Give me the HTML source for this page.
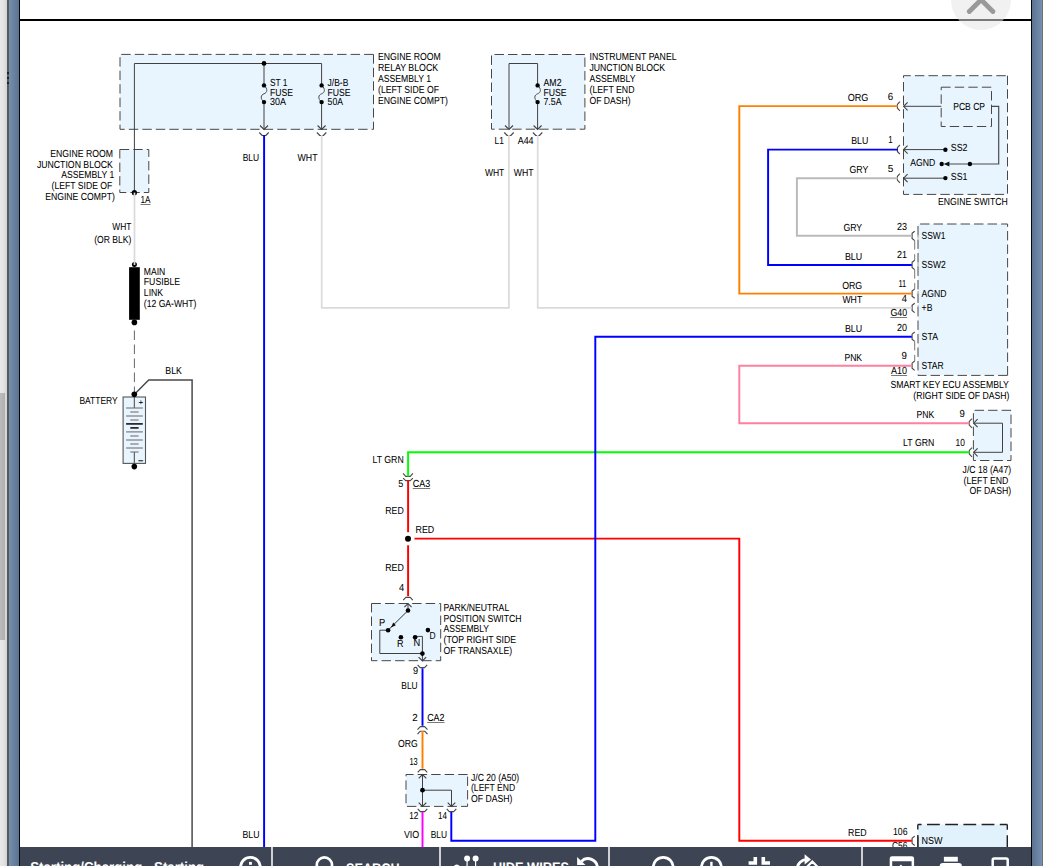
<!DOCTYPE html>
<html lang="en">
<head>
<meta charset="utf-8">
<title>Starting/Charging - Starting</title>
<style>
html,body{margin:0;padding:0;background:#fff;}
body{width:1043px;height:866px;overflow:hidden;position:relative;font-family:"Liberation Sans",sans-serif;}
#stage{position:absolute;left:0;top:0;width:1043px;height:866px;overflow:hidden;background:#fff;}
#diagram{position:absolute;left:0;top:0;}
#diagram text{font-family:"Liberation Sans",sans-serif;font-size:10.2px;fill:#000;stroke:#000;stroke-width:.05px;text-rendering:geometricPrecision;}
.track{position:absolute;left:0;top:0;width:7px;height:866px;background:linear-gradient(90deg,#e8e8e8 0,#e3e3e3 50%,#d2d2d2 100%);}
.thumb{position:absolute;left:0;top:393px;width:5px;height:247px;background:linear-gradient(90deg,#bcbcbc,#b0b0b0);}
.edge{position:absolute;top:0;height:866px;}
.lgrip{left:7px;width:2px;background:#595959;}
.lblue{left:9px;width:10px;background:linear-gradient(90deg,#7490b0,#5c7390);}
.lline{left:19px;width:1.3px;background:#05090f;}
.rline{left:1030.8px;width:1.3px;background:#05090f;}
.rblue{left:1032px;width:10px;background:linear-gradient(90deg,#5c7390,#7490b0);}
.rgrip{left:1042px;width:1px;background:#6e6e6e;}
.topline{position:absolute;left:20px;top:19px;width:1011px;height:2px;background:#000;}
.dots i{position:absolute;left:7px;width:2px;height:2px;background:#1c1f24;}
.up{position:absolute;left:951.1px;top:-30.1px;width:60px;height:60px;border-radius:50%;background:rgba(228,228,228,.53);}
#bar{position:absolute;left:20px;top:847px;width:1011px;height:60px;background:#3d4555;color:#fff;}
#tools{position:absolute;left:0;top:0;}
#tools text{font-family:"Liberation Sans",sans-serif;text-rendering:geometricPrecision;}
</style>
</head>
<body>
<div id="stage">
<svg id="diagram" width="1043" height="866" viewBox="0 0 1043 866">
<rect x="120.0" y="54.4" width="253.5" height="74.9" fill="#e9f5fe"/>
<path d="M121.28 54.4H130.68M134.77 54.4H144.17M148.26 54.4H157.66M161.75 54.4H171.15M175.24 54.4H184.64M188.73 54.4H198.13M202.22 54.4H211.62M215.71 54.4H225.11M229.20 54.4H238.60M242.69 54.4H252.09M256.18 54.4H265.58M269.67 54.4H279.07M283.16 54.4H292.56M296.65 54.4H306.05M310.14 54.4H319.54M323.63 54.4H333.03M337.12 54.4H346.52M350.61 54.4H360.01M364.10 54.4H373.50M120.00 129.3H124.76M128.85 129.3H138.25M142.34 129.3H151.74M155.83 129.3H165.23M169.32 129.3H178.72M182.81 129.3H192.21M196.30 129.3H205.70M209.79 129.3H219.19M223.28 129.3H232.68M236.77 129.3H246.17M250.26 129.3H259.66M263.75 129.3H273.15M277.24 129.3H286.64M290.73 129.3H300.13M304.22 129.3H313.62M317.71 129.3H327.11M331.20 129.3H340.60M344.69 129.3H354.09M358.18 129.3H367.58M371.67 129.3H373.50M120.0 57.21V66.61M120.0 70.70V80.10M120.0 84.19V93.59M120.0 97.68V107.08M120.0 111.17V120.57M120.0 124.66V129.30M373.5 54.40V63.68M373.5 67.77V77.17M373.5 81.26V90.66M373.5 94.75V104.15M373.5 108.24V117.64M373.5 121.73V129.30" fill="none" stroke="#474747" stroke-width="1.0"/>
<rect x="119.8" y="149.5" width="29.0" height="43.0" fill="#e9f5fe"/>
<path d="M119.80 149.5H129.20M133.29 149.5H142.69M146.78 149.5H148.75M119.80 192.5H126.27M130.36 192.5H139.76M143.85 192.5H148.75M119.8 149.50V158.50M119.8 162.59V171.99M119.8 176.08V185.48M119.8 189.57V192.50M148.8 149.50V156.93M148.8 161.02V170.42M148.8 174.51V183.91M148.8 188.00V192.50" fill="none" stroke="#474747" stroke-width="1.0"/>
<rect x="491.5" y="54.5" width="93.4" height="74.7" fill="#e9f5fe"/>
<path d="M494.56 54.5H503.96M508.05 54.5H517.45M521.54 54.5H530.94M535.03 54.5H544.43M548.52 54.5H557.92M562.01 54.5H571.41M575.50 54.5H584.90M491.50 129.2H494.68M498.77 129.2H508.17M512.26 129.2H521.66M525.75 129.2H535.15M539.24 129.2H548.64M552.73 129.2H562.13M566.22 129.2H575.62M579.71 129.2H584.90M491.5 55.53V64.93M491.5 69.02V78.42M491.5 82.51V91.91M491.5 96.00V105.40M491.5 109.49V118.89M491.5 122.98V129.20M584.9 57.54V66.94M584.9 71.03V80.43M584.9 84.52V93.92M584.9 98.01V107.41M584.9 111.50V120.90M584.9 124.99V129.20" fill="none" stroke="#474747" stroke-width="1.0"/>
<rect x="903.5" y="75.7" width="104.0" height="118.7" fill="#e9f5fe"/>
<path d="M903.50 75.7H910.75M914.92 75.7H924.32M928.49 75.7H937.89M942.06 75.7H951.46M955.63 75.7H965.03M969.20 75.7H978.60M982.77 75.7H992.17M996.34 75.7H1005.74M903.50 194.4H909.08M913.25 194.4H922.65M926.82 194.4H936.22M940.39 194.4H949.79M953.96 194.4H963.36M967.53 194.4H976.93M981.10 194.4H990.50M994.67 194.4H1004.07M903.5 75.70V77.85M903.5 82.02V91.42M903.5 95.59V104.99M903.5 109.16V118.56M903.5 122.73V132.13M903.5 136.30V145.70M903.5 149.87V159.27M903.5 163.44V172.84M903.5 177.01V186.41M903.5 190.58V194.40M1007.5 75.70V85.10M1007.5 89.27V98.67M1007.5 102.84V112.24M1007.5 116.41V125.81M1007.5 129.98V139.38M1007.5 143.55V152.95M1007.5 157.12V166.52M1007.5 170.69V180.09M1007.5 184.26V193.66" fill="none" stroke="#474747" stroke-width="1.0"/>
<rect x="941.2" y="87.2" width="50.3" height="39.3" fill="#e9f5fe"/>
<path d="M941.20 87.2H950.60M954.75 87.2H964.15M968.30 87.2H977.70M981.85 87.2H991.25M941.20 126.5H945.60M949.75 126.5H959.15M963.30 126.5H972.70M976.85 126.5H986.25M990.40 126.5H991.50M941.2 87.20V90.25M941.2 94.40V103.80M941.2 107.95V117.35M941.2 121.50V126.50M991.5 91.10V100.50M991.5 104.65V114.05M991.5 118.20V126.50" fill="none" stroke="#474747" stroke-width="1.0"/>
<rect x="918.0" y="224.0" width="89.6" height="151.4" fill="#e9f5fe"/>
<path d="M920.10 224.0H929.50M933.60 224.0H943.00M947.10 224.0H956.50M960.60 224.0H970.00M974.10 224.0H983.50M987.60 224.0H997.00M1001.10 224.0H1007.60M918.00 375.4H926.50M930.60 375.4H940.00M944.10 375.4H953.50M957.60 375.4H967.00M971.10 375.4H980.50M984.60 375.4H994.00M998.10 375.4H1007.50M918.0 226.00V235.40M918.0 239.50V248.90M918.0 253.00V262.40M918.0 266.50V275.90M918.0 280.00V289.40M918.0 293.50V302.90M918.0 307.00V316.40M918.0 320.50V329.90M918.0 334.00V343.40M918.0 347.50V356.90M918.0 361.00V370.40M918.0 374.50V375.40M1007.6 224.00V226.90M1007.6 231.00V240.40M1007.6 244.50V253.90M1007.6 258.00V267.40M1007.6 271.50V280.90M1007.6 285.00V294.40M1007.6 298.50V307.90M1007.6 312.00V321.40M1007.6 325.50V334.90M1007.6 339.00V348.40M1007.6 352.50V361.90M1007.6 366.00V375.40" fill="none" stroke="#474747" stroke-width="1.0"/>
<rect x="973.4" y="410.3" width="37.6" height="50.2" fill="#e9f5fe"/>
<path d="M974.62 410.3H984.02M988.11 410.3H997.51M1001.60 410.3H1011.00M973.40 460.5H975.94M980.03 460.5H989.43M993.52 460.5H1002.92M1007.01 460.5H1011.00M973.4 413.17V422.57M973.4 426.66V436.06M973.4 440.15V449.55M973.4 453.64V460.50M1011.0 410.30V410.53M1011.0 414.62V424.02M1011.0 428.11V437.51M1011.0 441.60V451.00M1011.0 455.09V460.50" fill="none" stroke="#474747" stroke-width="1.0"/>
<rect x="371.5" y="603.5" width="69.2" height="57.2" fill="#e9f5fe"/>
<path d="M371.50 603.5H380.90M385.05 603.5H394.45M398.60 603.5H408.00M412.15 603.5H421.55M425.70 603.5H435.10M439.25 603.5H440.70M371.50 660.7H377.40M381.55 660.7H390.95M395.10 660.7H404.50M408.65 660.7H418.05M422.20 660.7H431.60M435.75 660.7H440.70M371.5 603.50V612.40M371.5 616.55V625.95M371.5 630.10V639.50M371.5 643.65V653.05M371.5 657.20V660.70M440.7 603.50V611.45M440.7 615.60V625.00M440.7 629.15V638.55M440.7 642.70V652.10M440.7 656.25V660.70" fill="none" stroke="#474747" stroke-width="1.0"/>
<rect x="406.0" y="774.5" width="61.6" height="31.9" fill="#e9f5fe"/>
<path d="M406.00 774.5H413.60M417.70 774.5H427.10M431.20 774.5H440.60M444.70 774.5H454.10M458.20 774.5H467.60M407.00 806.4H416.40M420.50 806.4H429.90M434.00 806.4H443.40M447.50 806.4H456.90M461.00 806.4H467.60M406.0 774.50V776.30M406.0 780.40V789.80M406.0 793.90V803.30M467.6 776.60V786.00M467.6 790.10V799.50M467.6 803.60V806.40" fill="none" stroke="#474747" stroke-width="1.0"/>
<rect x="917.8" y="824.5" width="89.5" height="55.5" fill="#e2f2fc"/>
<path d="M917.80 824.5H921.60M927.00 824.5H939.80M945.20 824.5H958.00M963.40 824.5H976.20M981.60 824.5H994.40M999.80 824.5H1007.30M917.80 880.0H922.80M928.20 880.0H941.00M946.40 880.0H959.20M964.60 880.0H977.40M982.80 880.0H995.60M1001.00 880.0H1007.30M917.8 824.50V829.60M917.8 835.00V847.80M917.8 853.20V866.00M917.8 871.40V880.00M1007.3 824.50V829.80M1007.3 835.20V848.00M1007.3 853.40V866.20M1007.3 871.60V880.00" fill="none" stroke="#222" stroke-width="1.4"/>
<path d="M134.4 192.5 L134.4 63.5 L321.6 63.5 L321.6 85.0" fill="none" stroke="#404040" stroke-width="1.0"/>
<path d="M264.0 63.5 L264.0 85.0" fill="none" stroke="#404040" stroke-width="1.0"/>
<path d="M264.0 102.0 L264.0 129.3" fill="none" stroke="#404040" stroke-width="1.0"/>
<path d="M321.6 102.0 L321.6 129.3" fill="none" stroke="#404040" stroke-width="1.0"/>
<path d="M264.0 85.4 C268.2 88.9 267.2 92.8 264.0 93.8 C260.8 94.8 259.8 98.6 264.0 102.1" fill="none" stroke="#4c4c4c" stroke-width="1.0"/>
<path d="M321.6 85.4 C325.8 88.9 324.8 92.8 321.6 93.8 C318.4 94.8 317.4 98.6 321.6 102.1" fill="none" stroke="#4c4c4c" stroke-width="1.0"/>
<path d="M260.0 125.5 L264.0 129.5 L268.0 125.5" fill="none" stroke="#404040" stroke-width="1.1"/>
<path d="M317.6 125.5 L321.6 129.5 L325.6 125.5" fill="none" stroke="#404040" stroke-width="1.1"/>
<path d="M259.3 132.5 L262.2 135.5 L265.8 135.5 L268.7 132.5" fill="none" stroke="#4a4a4a" stroke-width="1.15" stroke-linejoin="round"/>
<path d="M316.9 132.5 L319.8 135.5 L323.4 135.5 L326.3 132.5" fill="none" stroke="#4a4a4a" stroke-width="1.15" stroke-linejoin="round"/>
<circle cx="134.4" cy="192.7" r="2.6" fill="#000"/>
<path d="M509.0 129.3 L509.0 63.5 L537.6 63.5 L537.6 85.0" fill="none" stroke="#404040" stroke-width="1.0"/>
<path d="M537.6 102.0 L537.6 129.3" fill="none" stroke="#404040" stroke-width="1.0"/>
<path d="M537.6 85.4 C541.8 88.9 540.8 92.8 537.6 93.8 C534.4 94.8 533.4 98.6 537.6 102.1" fill="none" stroke="#4c4c4c" stroke-width="1.0"/>
<path d="M505.0 125.5 L509.0 129.5 L513.0 125.5" fill="none" stroke="#404040" stroke-width="1.1"/>
<path d="M533.6 125.5 L537.6 129.5 L541.6 125.5" fill="none" stroke="#404040" stroke-width="1.1"/>
<path d="M504.3 132.5 L507.2 135.5 L510.8 135.5 L513.7 132.5" fill="none" stroke="#4a4a4a" stroke-width="1.15" stroke-linejoin="round"/>
<path d="M532.9 132.5 L535.8 135.5 L539.4 135.5 L542.3 132.5" fill="none" stroke="#4a4a4a" stroke-width="1.15" stroke-linejoin="round"/>
<rect x="129.1" y="267.2" width="10.7" height="52.6" fill="#000"/>
<circle cx="134.4" cy="264.6" r="2.5" fill="#000"/>
<line x1="134.4" y1="330.5" x2="134.4" y2="392" stroke="#666" stroke-width="1" stroke-dasharray="9.5 4.5"/>
<rect x="123.1" y="397.0" width="22.4" height="66.4" fill="#e9f5fe" stroke="#555" stroke-width="1.1"/>
<path d="M134.3 397.0 L134.3 408.0" fill="none" stroke="#444" stroke-width="1.0"/>
<path d="M134.3 452.0 L134.3 463.4" fill="none" stroke="#444" stroke-width="1.0"/>
<line x1="126.1" y1="408" x2="142.8" y2="408" stroke="#6c6c6c" stroke-width="1.05"/>
<line x1="126.1" y1="416" x2="142.8" y2="416" stroke="#6c6c6c" stroke-width="1.05"/>
<line x1="126.1" y1="423.9" x2="142.8" y2="423.9" stroke="#151515" stroke-width="1.6"/>
<line x1="126.1" y1="431.9" x2="142.8" y2="431.9" stroke="#6c6c6c" stroke-width="1.05"/>
<line x1="126.1" y1="440" x2="142.8" y2="440" stroke="#6c6c6c" stroke-width="1.05"/>
<line x1="126.1" y1="448" x2="142.8" y2="448" stroke="#6c6c6c" stroke-width="1.05"/>
<line x1="130.3" y1="412" x2="138.6" y2="412" stroke="#6c6c6c" stroke-width="1.05"/>
<line x1="130.3" y1="420" x2="138.6" y2="420" stroke="#6c6c6c" stroke-width="1.05"/>
<line x1="130.3" y1="427.9" x2="138.6" y2="427.9" stroke="#151515" stroke-width="1.6"/>
<line x1="130.3" y1="436" x2="138.6" y2="436" stroke="#6c6c6c" stroke-width="1.05"/>
<line x1="130.3" y1="444" x2="138.6" y2="444" stroke="#6c6c6c" stroke-width="1.05"/>
<line x1="130.3" y1="452" x2="138.6" y2="452" stroke="#6c6c6c" stroke-width="1.05"/>
<path d="M899.9 101.7 L897.4 104.4 L897.4 108.2 L899.9 110.9" fill="none" stroke="#4a4a4a" stroke-width="1.15" stroke-linejoin="round"/>
<path d="M907.6 102.3 L903.6 106.3 L907.6 110.3" fill="none" stroke="#404040" stroke-width="1.1"/>
<path d="M899.9 145.0 L897.4 147.7 L897.4 151.5 L899.9 154.2" fill="none" stroke="#4a4a4a" stroke-width="1.15" stroke-linejoin="round"/>
<path d="M907.6 145.6 L903.6 149.6 L907.6 153.6" fill="none" stroke="#404040" stroke-width="1.1"/>
<path d="M899.9 173.6 L897.4 176.3 L897.4 180.1 L899.9 182.8" fill="none" stroke="#4a4a4a" stroke-width="1.15" stroke-linejoin="round"/>
<path d="M907.6 174.2 L903.6 178.2 L907.6 182.2" fill="none" stroke="#404040" stroke-width="1.1"/>
<path d="M903.6 106.3 L941.3 106.3" fill="none" stroke="#404040" stroke-width="1.0"/>
<path d="M903.6 149.6 L945.4 149.6" fill="none" stroke="#404040" stroke-width="1.0"/>
<path d="M903.6 178.2 L945.4 178.2" fill="none" stroke="#404040" stroke-width="1.0"/>
<path d="M991.4 106.3 L998.7 106.3 L998.7 164.0 L946.0 164.0" fill="none" stroke="#4a4a4a" stroke-width="1.2"/>
<path d="M943.6 164 L949.4 161.6 L949.4 166.4 Z" fill="#111"/>
<path d="M914.7 231.2 L912.1 233.3 L912.1 238.5 L914.7 240.6" fill="none" stroke="#4a4a4a" stroke-width="1.15" stroke-linejoin="round"/>
<path d="M918.0 233.3 L918.0 238.5" fill="none" stroke="#9aa0a4" stroke-width="1.0"/>
<path d="M914.7 260.2 L912.1 262.3 L912.1 267.5 L914.7 269.6" fill="none" stroke="#4a4a4a" stroke-width="1.15" stroke-linejoin="round"/>
<path d="M918.0 262.3 L918.0 267.5" fill="none" stroke="#9aa0a4" stroke-width="1.0"/>
<path d="M914.7 288.9 L912.1 291.0 L912.1 296.2 L914.7 298.3" fill="none" stroke="#4a4a4a" stroke-width="1.15" stroke-linejoin="round"/>
<path d="M918.0 291.0 L918.0 296.2" fill="none" stroke="#9aa0a4" stroke-width="1.0"/>
<path d="M914.7 303.2 L912.1 305.3 L912.1 310.5 L914.7 312.6" fill="none" stroke="#4a4a4a" stroke-width="1.15" stroke-linejoin="round"/>
<path d="M918.0 305.3 L918.0 310.5" fill="none" stroke="#9aa0a4" stroke-width="1.0"/>
<path d="M914.7 332.0 L912.1 334.1 L912.1 339.3 L914.7 341.4" fill="none" stroke="#4a4a4a" stroke-width="1.15" stroke-linejoin="round"/>
<path d="M918.0 334.1 L918.0 339.3" fill="none" stroke="#9aa0a4" stroke-width="1.0"/>
<path d="M914.7 361.0 L912.1 363.1 L912.1 368.3 L914.7 370.4" fill="none" stroke="#4a4a4a" stroke-width="1.15" stroke-linejoin="round"/>
<path d="M918.0 363.1 L918.0 368.3" fill="none" stroke="#9aa0a4" stroke-width="1.0"/>
<path d="M914.7 240.6V260.2" fill="none" stroke="#777" stroke-width="1" stroke-dasharray="9 4.5"/>
<path d="M914.7 269.6V288.9" fill="none" stroke="#777" stroke-width="1" stroke-dasharray="9 4.5"/>
<path d="M914.7 341.4V361.0" fill="none" stroke="#777" stroke-width="1" stroke-dasharray="9 4.5"/>
<path d="M972.1 418.6 L969.3 421.3 L969.3 425.1 L972.1 427.8" fill="none" stroke="#4a4a4a" stroke-width="1.15" stroke-linejoin="round"/>
<path d="M977.6 419.2 L973.6 423.2 L977.6 427.2" fill="none" stroke="#404040" stroke-width="1.1"/>
<path d="M972.1 447.7 L969.3 450.4 L969.3 454.2 L972.1 456.9" fill="none" stroke="#4a4a4a" stroke-width="1.15" stroke-linejoin="round"/>
<path d="M977.6 448.3 L973.6 452.3 L977.6 456.3" fill="none" stroke="#404040" stroke-width="1.1"/>
<path d="M973.6 423.2 L1002.5 423.2 L1002.5 452.3 L973.6 452.3" fill="none" stroke="#404040" stroke-width="1.0"/>
<path d="M403.1 473.4 L405.7 476.4 L410.3 476.4 L412.9 473.4" fill="none" stroke="#4a4a4a" stroke-width="1.15" stroke-linejoin="round"/>
<path d="M403.1 478.2 L405.7 480.6 L410.3 480.6 L412.9 478.2" fill="none" stroke="#4a4a4a" stroke-width="1.15" stroke-linejoin="round"/>
<path d="M403.2 600.1 L405.8 597.3 L410.2 597.3 L412.8 600.1" fill="none" stroke="#4a4a4a" stroke-width="1.15" stroke-linejoin="round"/>
<path d="M404.4 607.2 L408.0 603.6 L411.6 607.2" fill="none" stroke="#404040" stroke-width="1.1"/>
<path d="M408.0 603.6 L408.0 610.5" fill="none" stroke="#404040" stroke-width="1.0"/>
<path d="M408.0 610.5 L388.1 630.2" fill="none" stroke="#333" stroke-width="1.0"/>
<path d="M391.0 627.4 L395.9 625.3 L393.2 622.6 Z" fill="#111"/>
<path d="M388.1 630.2 L379.8 630.2 L379.8 653.5 L422.4 653.5" fill="none" stroke="#404040" stroke-width="1.0"/>
<path d="M415.1 636.4 L422.4 636.4 L422.4 660.7" fill="none" stroke="#404040" stroke-width="1.0"/>
<path d="M418.6 657.1 L422.4 660.9 L426.2 657.1" fill="none" stroke="#404040" stroke-width="1.1"/>
<path d="M417.6 664.8 L420.2 667.6 L424.6 667.6 L427.2 664.8" fill="none" stroke="#4a4a4a" stroke-width="1.15" stroke-linejoin="round"/>
<path d="M417.5 729.6 L420.3 726.6 L424.7 726.6 L427.5 729.6" fill="none" stroke="#4a4a4a" stroke-width="1.15" stroke-linejoin="round"/>
<path d="M417.5 734.2 L420.3 731.2 L424.7 731.2 L427.5 734.2" fill="none" stroke="#4a4a4a" stroke-width="1.15" stroke-linejoin="round"/>
<path d="M417.7 772.4 L420.3 769.6 L424.7 769.6 L427.3 772.4" fill="none" stroke="#4a4a4a" stroke-width="1.15" stroke-linejoin="round"/>
<path d="M418.7 778.4 L422.5 774.6 L426.3 778.4" fill="none" stroke="#404040" stroke-width="1.1"/>
<path d="M422.5 774.6 L422.5 806.3" fill="none" stroke="#404040" stroke-width="1.0"/>
<path d="M418.7 802.7 L422.5 806.5 L426.3 802.7" fill="none" stroke="#404040" stroke-width="1.1"/>
<path d="M422.5 790.2 L451.5 790.2 L451.5 806.3" fill="none" stroke="#404040" stroke-width="1.0"/>
<path d="M447.7 802.7 L451.5 806.5 L455.3 802.7" fill="none" stroke="#404040" stroke-width="1.1"/>
<path d="M417.7 808.8 L420.3 811.6 L424.7 811.6 L427.3 808.8" fill="none" stroke="#4a4a4a" stroke-width="1.15" stroke-linejoin="round"/>
<path d="M446.7 808.8 L449.3 811.6 L453.7 811.6 L456.3 808.8" fill="none" stroke="#4a4a4a" stroke-width="1.15" stroke-linejoin="round"/>
<path d="M914.7 836.1 L912.1 838.2 L912.1 843.4 L914.7 845.5" fill="none" stroke="#4a4a4a" stroke-width="1.15" stroke-linejoin="round"/>
<path d="M918.0 836.5 L918.0 847.0" fill="none" stroke="#333" stroke-width="1.1"/>
<path d="M321.7 134.9 L321.7 307.9 L508.9 307.9 L508.9 134.9" fill="none" stroke="#dadada" stroke-width="1.7" stroke-linejoin="miter"/>
<path d="M537.7 134.9 L537.7 307.9 L911.8 307.9" fill="none" stroke="#dadada" stroke-width="1.7" stroke-linejoin="miter"/>
<path d="M134.5 192.6 L134.5 265.0" fill="none" stroke="#dadada" stroke-width="1.7" stroke-linejoin="miter"/>
<path d="M969.6 452.2 L408.1 452.2 L408.1 476.6" fill="none" stroke="#00ff00" stroke-width="1.95" stroke-linejoin="miter"/>
<path d="M408.1 480.6 L408.1 532.2" fill="none" stroke="#ff0000" stroke-width="1.95" stroke-linejoin="miter"/>
<path d="M408.1 545.3 L408.1 596.2" fill="none" stroke="#ff0000" stroke-width="1.95" stroke-linejoin="miter"/>
<path d="M414.5 538.6 L739.3 538.6 L739.3 840.8 L911.8 840.8" fill="none" stroke="#ff0000" stroke-width="1.95" stroke-linejoin="miter"/>
<path d="M911.8 365.7 L739.3 365.7 L739.3 423.2 L969.6 423.2" fill="none" stroke="#ff80a0" stroke-width="1.95" stroke-linejoin="miter"/>
<path d="M897.8 106.1 L739.3 106.1 L739.3 293.6 L911.8 293.6" fill="none" stroke="#ff8000" stroke-width="1.95" stroke-linejoin="miter"/>
<path d="M422.5 731.0 L422.5 768.8" fill="none" stroke="#ff8000" stroke-width="1.95" stroke-linejoin="miter"/>
<path d="M897.8 178.3 L796.9 178.3 L796.9 235.8 L911.8 235.8" fill="none" stroke="#bababa" stroke-width="1.95" stroke-linejoin="miter"/>
<path d="M897.8 149.6 L768.1 149.6 L768.1 264.9 L911.8 264.9" fill="none" stroke="#0000ff" stroke-width="1.95" stroke-linejoin="miter"/>
<path d="M264.1 134.9 L264.1 847.0" fill="none" stroke="#0000ff" stroke-width="1.95" stroke-linejoin="miter"/>
<path d="M422.5 668.3 L422.5 725.8" fill="none" stroke="#0000ff" stroke-width="1.95" stroke-linejoin="miter"/>
<path d="M451.3 812.0 L451.3 840.8 L595.3 840.8 L595.3 336.8 L911.8 336.8" fill="none" stroke="#0000ff" stroke-width="1.95" stroke-linejoin="miter"/>
<path d="M422.5 812.0 L422.5 847.0" fill="none" stroke="#ff00ff" stroke-width="1.95" stroke-linejoin="miter"/>
<path d="M134.5 394.2 L148.7 380.0 L192.1 380.0 L192.1 847.0" fill="none" stroke="#4a4a4a" stroke-width="1.5" stroke-linejoin="miter"/>
<circle cx="264.0" cy="63.4" r="2.4" fill="#000"/>
<circle cx="264.0" cy="85.4" r="2.2" fill="#000"/>
<circle cx="264.0" cy="102.1" r="2.2" fill="#000"/>
<circle cx="321.6" cy="85.4" r="2.2" fill="#000"/>
<circle cx="321.6" cy="102.1" r="2.2" fill="#000"/>
<circle cx="537.6" cy="85.4" r="2.2" fill="#000"/>
<circle cx="537.6" cy="102.1" r="2.2" fill="#000"/>
<circle cx="134.4" cy="322.4" r="2.8" fill="#000"/>
<circle cx="134.3" cy="394.2" r="2.8" fill="#000"/>
<circle cx="134.3" cy="466.6" r="2.8" fill="#000"/>
<circle cx="945.4" cy="149.7" r="2.2" fill="#000"/>
<circle cx="945.4" cy="178.1" r="2.2" fill="#000"/>
<circle cx="941.7" cy="164.0" r="2.2" fill="#000"/>
<circle cx="969.9" cy="164.0" r="2.2" fill="#000"/>
<circle cx="408.0" cy="538.7" r="3.0" fill="#000"/>
<circle cx="408.0" cy="610.5" r="2.3" fill="#000"/>
<circle cx="388.1" cy="630.2" r="2.3" fill="#000"/>
<circle cx="400.9" cy="637.3" r="2.3" fill="#000"/>
<circle cx="415.1" cy="637.3" r="2.3" fill="#000"/>
<circle cx="427.9" cy="630.1" r="2.3" fill="#000"/>
<circle cx="422.4" cy="653.6" r="2.3" fill="#000"/>
<circle cx="422.5" cy="790.2" r="2.4" fill="#000"/>
<text x="138.6" y="404.6" style="font-size:8px">+</text>
<text x="138.6" y="463.0" style="font-size:9px;stroke-width:.25px" textLength="4.4" lengthAdjust="spacingAndGlyphs">–</text>
<text x="50.3" y="157.0" textLength="62.6" lengthAdjust="spacingAndGlyphs">ENGINE ROOM</text>
<text x="36.9" y="168.0" textLength="76.0" lengthAdjust="spacingAndGlyphs">JUNCTION BLOCK</text>
<text x="61.3" y="178.0" textLength="53.0" lengthAdjust="spacingAndGlyphs">ASSEMBLY 1</text>
<text x="51.6" y="189.0" textLength="60.7" lengthAdjust="spacingAndGlyphs">(LEFT SIDE OF</text>
<text x="45.2" y="200.0" textLength="69.7" lengthAdjust="spacingAndGlyphs">ENGINE COMPT)</text>
<text x="112.3" y="230.0" textLength="19.1" lengthAdjust="spacingAndGlyphs">WHT</text>
<text x="94.2" y="243.0" textLength="37.2" lengthAdjust="spacingAndGlyphs">(OR BLK)</text>
<text x="143.8" y="275.0" textLength="21.5" lengthAdjust="spacingAndGlyphs">MAIN</text>
<text x="143.8" y="285.0" textLength="36.3" lengthAdjust="spacingAndGlyphs">FUSIBLE</text>
<text x="143.8" y="296.0" textLength="19.4" lengthAdjust="spacingAndGlyphs">LINK</text>
<text x="143.8" y="307.0" textLength="52.7" lengthAdjust="spacingAndGlyphs">(12 GA-WHT)</text>
<text x="165.3" y="374.0" textLength="16.6" lengthAdjust="spacingAndGlyphs">BLK</text>
<text x="79.4" y="404.0" textLength="38.3" lengthAdjust="spacingAndGlyphs">BATTERY</text>
<text x="269.9" y="86.0" textLength="17.6" lengthAdjust="spacingAndGlyphs">ST 1</text>
<text x="269.9" y="96.0" textLength="23.1" lengthAdjust="spacingAndGlyphs">FUSE</text>
<text x="269.9" y="105.0" textLength="16.0" lengthAdjust="spacingAndGlyphs">30A</text>
<text x="327.6" y="86.0" textLength="20.7" lengthAdjust="spacingAndGlyphs">J/B-B</text>
<text x="327.6" y="96.0" textLength="23.0" lengthAdjust="spacingAndGlyphs">FUSE</text>
<text x="327.6" y="105.0" textLength="15.4" lengthAdjust="spacingAndGlyphs">50A</text>
<text x="242.7" y="161.0" textLength="16.5" lengthAdjust="spacingAndGlyphs">BLU</text>
<text x="297.5" y="161.0" textLength="20.0" lengthAdjust="spacingAndGlyphs">WHT</text>
<text x="378.0" y="60.0" textLength="62.8" lengthAdjust="spacingAndGlyphs">ENGINE ROOM</text>
<text x="378.0" y="71.0" textLength="60.1" lengthAdjust="spacingAndGlyphs">RELAY BLOCK</text>
<text x="378.0" y="82.0" textLength="53.0" lengthAdjust="spacingAndGlyphs">ASSEMBLY 1</text>
<text x="378.0" y="93.0" textLength="61.0" lengthAdjust="spacingAndGlyphs">(LEFT SIDE OF</text>
<text x="378.0" y="104.0" textLength="69.9" lengthAdjust="spacingAndGlyphs">ENGINE COMPT)</text>
<text x="494.5" y="144.0" textLength="9.3" lengthAdjust="spacingAndGlyphs">L1</text>
<text x="517.7" y="144.0" textLength="15.9" lengthAdjust="spacingAndGlyphs">A44</text>
<text x="484.9" y="176.0" textLength="19.4" lengthAdjust="spacingAndGlyphs">WHT</text>
<text x="513.7" y="176.0" textLength="19.8" lengthAdjust="spacingAndGlyphs">WHT</text>
<text x="543.5" y="86.0" textLength="18.0" lengthAdjust="spacingAndGlyphs">AM2</text>
<text x="543.5" y="96.0" textLength="23.1" lengthAdjust="spacingAndGlyphs">FUSE</text>
<text x="543.5" y="105.0" textLength="18.0" lengthAdjust="spacingAndGlyphs">7.5A</text>
<text x="589.5" y="60.0" textLength="87.0" lengthAdjust="spacingAndGlyphs">INSTRUMENT PANEL</text>
<text x="589.5" y="71.0" textLength="75.6" lengthAdjust="spacingAndGlyphs">JUNCTION BLOCK</text>
<text x="589.5" y="82.0" textLength="46.0" lengthAdjust="spacingAndGlyphs">ASSEMBLY</text>
<text x="589.5" y="93.0" textLength="45.0" lengthAdjust="spacingAndGlyphs">(LEFT END</text>
<text x="589.5" y="104.0" textLength="41.0" lengthAdjust="spacingAndGlyphs">OF DASH)</text>
<text x="847.7" y="101.0" textLength="20.7" lengthAdjust="spacingAndGlyphs">ORG</text>
<text x="887.7" y="100.0" textLength="5.4" lengthAdjust="spacingAndGlyphs">6</text>
<text x="851.2" y="144.0" textLength="17.1" lengthAdjust="spacingAndGlyphs">BLU</text>
<text x="888.3" y="143.0" textLength="4.4" lengthAdjust="spacingAndGlyphs">1</text>
<text x="849.5" y="173.0" textLength="18.8" lengthAdjust="spacingAndGlyphs">GRY</text>
<text x="887.7" y="172.0" textLength="5.6" lengthAdjust="spacingAndGlyphs">5</text>
<text x="953.3" y="110.0" textLength="31.7" lengthAdjust="spacingAndGlyphs">PCB CP</text>
<text x="950.8" y="151.0" textLength="16.7" lengthAdjust="spacingAndGlyphs">SS2</text>
<text x="910.3" y="166.0" textLength="25.0" lengthAdjust="spacingAndGlyphs">AGND</text>
<text x="950.8" y="180.0" textLength="16.7" lengthAdjust="spacingAndGlyphs">SS1</text>
<text x="938.1" y="205.0" textLength="69.7" lengthAdjust="spacingAndGlyphs">ENGINE SWITCH</text>
<text x="843.4" y="231.0" textLength="18.8" lengthAdjust="spacingAndGlyphs">GRY</text>
<text x="897.1" y="230.0" textLength="10.0" lengthAdjust="spacingAndGlyphs">23</text>
<text x="844.9" y="260.0" textLength="17.3" lengthAdjust="spacingAndGlyphs">BLU</text>
<text x="897.1" y="258.0" textLength="10.0" lengthAdjust="spacingAndGlyphs">21</text>
<text x="842.2" y="289.0" textLength="20.0" lengthAdjust="spacingAndGlyphs">ORG</text>
<text x="898.5" y="287.0" textLength="7.8" lengthAdjust="spacingAndGlyphs">11</text>
<text x="842.4" y="303.0" textLength="19.8" lengthAdjust="spacingAndGlyphs">WHT</text>
<text x="901.7" y="302.0" textLength="5.2" lengthAdjust="spacingAndGlyphs">4</text>
<text x="844.9" y="332.0" textLength="17.3" lengthAdjust="spacingAndGlyphs">BLU</text>
<text x="897.1" y="331.0" textLength="10.0" lengthAdjust="spacingAndGlyphs">20</text>
<text x="844.4" y="361.0" textLength="17.7" lengthAdjust="spacingAndGlyphs">PNK</text>
<text x="901.4" y="359.0" textLength="5.4" lengthAdjust="spacingAndGlyphs">9</text>
<text x="921.6" y="239.0" textLength="23.8" lengthAdjust="spacingAndGlyphs">SSW1</text>
<text x="921.6" y="268.0" textLength="24.2" lengthAdjust="spacingAndGlyphs">SSW2</text>
<text x="921.6" y="297.0" textLength="24.9" lengthAdjust="spacingAndGlyphs">AGND</text>
<text x="921.6" y="311.0" textLength="10.8" lengthAdjust="spacingAndGlyphs">+B</text>
<text x="921.6" y="340.0" textLength="16.4" lengthAdjust="spacingAndGlyphs">STA</text>
<text x="921.6" y="369.0" textLength="22.1" lengthAdjust="spacingAndGlyphs">STAR</text>
<text x="890.4" y="388.0" textLength="118.5" lengthAdjust="spacingAndGlyphs">SMART KEY ECU ASSEMBLY</text>
<text x="913.3" y="399.0" textLength="96.1" lengthAdjust="spacingAndGlyphs">(RIGHT SIDE OF DASH)</text>
<text x="916.5" y="418.0" textLength="17.8" lengthAdjust="spacingAndGlyphs">PNK</text>
<text x="959.5" y="417.0" textLength="5.3" lengthAdjust="spacingAndGlyphs">9</text>
<text x="903.1" y="446.0" textLength="31.2" lengthAdjust="spacingAndGlyphs">LT GRN</text>
<text x="955.5" y="446.0" textLength="9.3" lengthAdjust="spacingAndGlyphs">10</text>
<text x="962.6" y="473.0" textLength="48.5" lengthAdjust="spacingAndGlyphs">J/C 18 (A47)</text>
<text x="963.5" y="484.0" textLength="44.9" lengthAdjust="spacingAndGlyphs">(LEFT END</text>
<text x="969.6" y="494.0" textLength="41.5" lengthAdjust="spacingAndGlyphs">OF DASH)</text>
<text x="372.5" y="463.0" textLength="31.2" lengthAdjust="spacingAndGlyphs">LT GRN</text>
<text x="398.3" y="487.0" textLength="5.0" lengthAdjust="spacingAndGlyphs">5</text>
<text x="385.3" y="514.0" textLength="18.4" lengthAdjust="spacingAndGlyphs">RED</text>
<text x="415.5" y="533.0" textLength="18.7" lengthAdjust="spacingAndGlyphs">RED</text>
<text x="385.2" y="571.0" textLength="18.6" lengthAdjust="spacingAndGlyphs">RED</text>
<text x="398.9" y="591.0" textLength="5.2" lengthAdjust="spacingAndGlyphs">4</text>
<text x="379.1" y="626.0" textLength="6.2" lengthAdjust="spacingAndGlyphs">P</text>
<text x="397.1" y="647.0" textLength="6.5" lengthAdjust="spacingAndGlyphs">R</text>
<text x="413.6" y="646.0" textLength="6.7" lengthAdjust="spacingAndGlyphs">N</text>
<text x="429.6" y="639.0" textLength="6.1" lengthAdjust="spacingAndGlyphs">D</text>
<text x="443.5" y="611.0" textLength="65.7" lengthAdjust="spacingAndGlyphs">PARK/NEUTRAL</text>
<text x="443.5" y="622.0" textLength="78.1" lengthAdjust="spacingAndGlyphs">POSITION SWITCH</text>
<text x="443.5" y="632.0" textLength="45.6" lengthAdjust="spacingAndGlyphs">ASSEMBLY</text>
<text x="443.5" y="643.0" textLength="72.6" lengthAdjust="spacingAndGlyphs">(TOP RIGHT SIDE</text>
<text x="443.5" y="654.0" textLength="68.6" lengthAdjust="spacingAndGlyphs">OF TRANSAXLE)</text>
<text x="412.9" y="674.0" textLength="5.1" lengthAdjust="spacingAndGlyphs">9</text>
<text x="401.3" y="689.0" textLength="16.4" lengthAdjust="spacingAndGlyphs">BLU</text>
<text x="412.3" y="721.0" textLength="5.4" lengthAdjust="spacingAndGlyphs">2</text>
<text x="398.0" y="747.0" textLength="19.7" lengthAdjust="spacingAndGlyphs">ORG</text>
<text x="409.4" y="765.0" textLength="8.3" lengthAdjust="spacingAndGlyphs">13</text>
<text x="471.0" y="781.0" textLength="48.2" lengthAdjust="spacingAndGlyphs">J/C 20 (A50)</text>
<text x="471.0" y="791.0" textLength="44.2" lengthAdjust="spacingAndGlyphs">(LEFT END</text>
<text x="471.0" y="802.0" textLength="41.5" lengthAdjust="spacingAndGlyphs">OF DASH)</text>
<text x="409.2" y="819.0" textLength="9.1" lengthAdjust="spacingAndGlyphs">12</text>
<text x="438.1" y="819.0" textLength="8.9" lengthAdjust="spacingAndGlyphs">14</text>
<text x="403.9" y="838.0" textLength="15.3" lengthAdjust="spacingAndGlyphs">VIO</text>
<text x="430.7" y="838.0" textLength="16.3" lengthAdjust="spacingAndGlyphs">BLU</text>
<text x="242.5" y="838.0" textLength="17.0" lengthAdjust="spacingAndGlyphs">BLU</text>
<text x="848.1" y="836.0" textLength="18.5" lengthAdjust="spacingAndGlyphs">RED</text>
<text x="893.0" y="835.0" textLength="14.5" lengthAdjust="spacingAndGlyphs">106</text>
<text x="921.6" y="844.0" textLength="21.0" lengthAdjust="spacingAndGlyphs">NSW</text>
<text x="140.5" y="203.0" textLength="10.0" lengthAdjust="spacingAndGlyphs">1A</text>
<line x1="140.5" y1="204.5" x2="150.5" y2="204.5" stroke="#6a6a6a" stroke-width="0.9"/>
<text x="890.4" y="316.0" textLength="16.7" lengthAdjust="spacingAndGlyphs">G40</text>
<line x1="890.4" y1="317.5" x2="907.1" y2="317.5" stroke="#6a6a6a" stroke-width="0.9"/>
<text x="891.1" y="374.0" textLength="16.0" lengthAdjust="spacingAndGlyphs">A10</text>
<line x1="891.1" y1="375.5" x2="907.1" y2="375.5" stroke="#6a6a6a" stroke-width="0.9"/>
<text x="412.8" y="487.0" textLength="17.4" lengthAdjust="spacingAndGlyphs">CA3</text>
<line x1="412.8" y1="488.5" x2="430.2" y2="488.5" stroke="#6a6a6a" stroke-width="0.9"/>
<text x="427.2" y="721.0" textLength="17.3" lengthAdjust="spacingAndGlyphs">CA2</text>
<line x1="427.2" y1="722.5" x2="444.5" y2="722.5" stroke="#6a6a6a" stroke-width="0.9"/>
<text x="892.0" y="849.0" textLength="15.3" lengthAdjust="spacingAndGlyphs">C56</text>
<line x1="892.0" y1="850.5" x2="907.3" y2="850.5" stroke="#6a6a6a" stroke-width="0.9"/>
</svg>
<div class="topline"></div>
<div class="up"></div>
<svg style="position:absolute;left:951px;top:-10px" width="60" height="40" viewBox="0 0 60 40"><path d="M18.3 21.5 L30.1 9.7 L41.9 21.5" fill="none" stroke="#999" stroke-width="4.8" stroke-linecap="round" stroke-linejoin="miter"/></svg>
<div class="track"></div><div class="thumb"></div>
<div class="edge lgrip"></div><div class="edge lblue"></div><div class="edge lline"></div>
<div class="edge rline"></div><div class="edge rblue"></div><div class="edge rgrip"></div>
<div class="dots"><i style="top:72px"></i><i style="top:77px"></i><i style="top:81.6px"></i></div>
<div id="bar"></div>
<svg id="tools" width="1043" height="866" viewBox="0 0 1043 866" fill="none" stroke="#fff" stroke-width="2.3">
<g stroke="none" fill="#cfd1d5">
<rect x="271" y="847" width="2" height="19"/>
<rect x="439" y="847" width="2" height="19"/>
<rect x="608" y="847" width="2" height="19"/>
<rect x="861" y="847" width="2" height="19"/>
</g>
<g stroke="none" fill="#fff" font-weight="bold" font-size="14.4px">
<text x="30.2" y="871.6" textLength="174" lengthAdjust="spacingAndGlyphs">Starting/Charging - Starting</text>
<text x="346" y="872.6" font-size="13.8px" textLength="53.6" lengthAdjust="spacingAndGlyphs">SEARCH</text>
<text x="493" y="872.2" font-size="13.8px" textLength="76" lengthAdjust="spacingAndGlyphs">HIDE WIRES</text>
</g>
<circle cx="250.4" cy="867.3" r="9.9" stroke-width="2.9"/>
<rect x="249" y="861.9" width="2.9" height="2.9" fill="#fff" stroke="none"/>
<circle cx="324.4" cy="865" r="7.6" stroke-width="2.7"/>
<circle cx="467.1" cy="858.4" r="3" fill="#fff" stroke="none"/>
<circle cx="475.6" cy="858.4" r="3" fill="#fff" stroke="none"/>
<circle cx="456.8" cy="867.4" r="3" fill="#fff" stroke="none"/>
<path d="M467.1 859 V867 M475.6 859 V867" stroke-width="1.2"/>
<path d="M577.1 856.9 V864.9 H585.5 Z" fill="#fff" stroke="none"/>
<path d="M581.3 861.4 A9.4 9.4 0 0 1 597.4 868" stroke-width="2.9"/>
<circle cx="663.2" cy="867.4" r="10" stroke-width="2.7"/>
<circle cx="711.4" cy="867.4" r="10" stroke-width="2.7"/>
<path d="M711.4 861.8 V868" stroke-width="2.4"/>
<path d="M748.6 863 H755.3 V857 M770 863 H763.3 V857" stroke-width="3.6"/>
<path d="M797.3 868.5 A9.6 9.6 0 0 1 806.5 859.4" stroke-width="2.9"/>
<path d="M804.6 854.2 L811 859.4 L804.6 864.6 Z" fill="#fff" stroke="none"/>
<path d="M812.3 861.6 L817.5 866.8 L812.3 872 L807.1 866.8 Z" stroke-width="2.2"/>
<path d="M889.7 870 V858.6 A2.4 2.4 0 0 1 892.1 856.2 H911.7 A2.4 2.4 0 0 1 914.1 858.6 V870 H911.6 V861.3 H892.2 V870 Z" fill="#fff" stroke="none"/>
<path d="M900.9 864.4 L903.2 867 H898.6 Z" fill="#fff" stroke="none"/>
<rect x="943.9" y="856.8" width="13.9" height="4.8" fill="#fff" stroke="none"/>
<path d="M939.7 868 V866 A3.1 3.1 0 0 1 942.8 862.9 H958.8 A3.1 3.1 0 0 1 961.9 866 V868 Z" fill="#fff" stroke="none"/>
<rect x="992.7" y="858.6" width="15" height="14" rx="1.5" stroke-width="2.5"/>
</svg>
</div>
</div>
</body>
</html>
